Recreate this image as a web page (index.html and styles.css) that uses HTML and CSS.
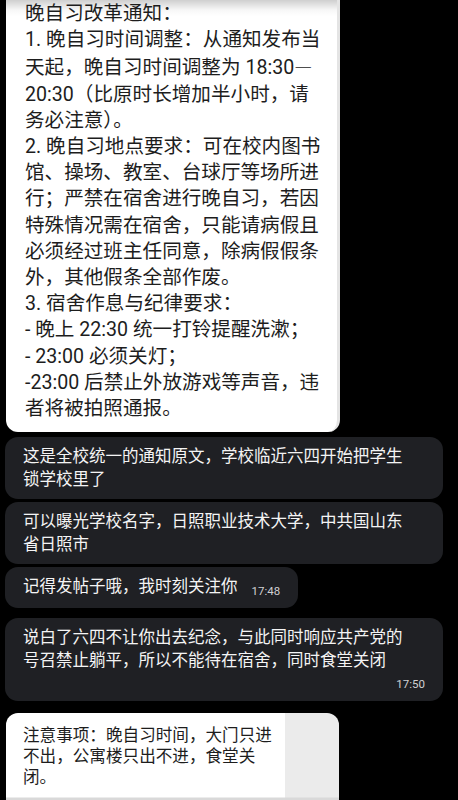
FILE: index.html
```html
<!DOCTYPE html>
<html lang="zh-CN">
<head>
    <meta charset="UTF-8">
    <meta name="viewport" content="width=device-width, initial-scale=1.0">
    <title>晚自习改革通知</title>
    <link rel="stylesheet" href="styles.css">
</head>
<body>
    <main class="chat">
        <div class="notice">
            晚自习改革通知：<br>
            1. 晚自习时间调整：从通知发布当<br>
            天起，晚自习时间调整为 18:30<span class="dash">—</span><br>
            20:30（比原时长增加半小时，请<br>
            务必注意）。<br>
            2. 晚自习地点要求：可在校内图书<br>
            馆、操场、教室、台球厅等场所进<br>
            行；严禁在宿舍进行晚自习，若因<br>
            特殊情况需在宿舍，只能请病假且<br>
            必须经过班主任同意，除病假假条<br>
            外，其他假条全部作废。<br>
            3. 宿舍作息与纪律要求：<br>
            - 晚上 22:30 统一打铃提醒洗漱；<br>
            - 23:00 必须关灯；<br>
            -23:00 后禁止外放游戏等声音，违<br>
            者将被拍照通报。
        </div>

        <div class="msg">这是全校统一的通知原文，学校临近六四开始把学生<br>锁学校里了</div>
        <div class="msg">可以曝光学校名字，日照职业技术大学，中共国山东<br>省日照市</div>
        <div class="msg short">记得发帖子哦，我时刻关注你<span class="time">17:48</span></div>
        <div class="msg last">
            说白了六四不让你出去纪念，与此同时响应共产党的<br>号召禁止躺平，所以不能待在宿舍，同时食堂关闭
            <div class="time-row">17:50</div>
        </div>

        <div class="notice-img">
            注意事项：晚自习时间，大门只进<br>
            不出，公寓楼只出不进，食堂关<br>
            闭。
        </div>
    </main>
</body>
</html>
```

FILE: styles.css
```css
body {
    margin: 0;
    height: 800px;
    overflow: hidden;
    background: #000;
    font-family: Roboto, "Noto Sans CJK SC", sans-serif;
}

.chat {
    display: flex;
    flex-direction: column;
    align-items: flex-start;
    padding-left: 5px;
}

.notice {
    box-sizing: border-box;
    width: 334px;
    margin-left: 1px;
    padding: 1px 0 10px 19px;
    font-size: 19.6px;
    line-height: 26.2px;
    color: #1d1d1d;
    background: linear-gradient(#cfcfcf 0, #f7f7f7 10px, #fff 16px);
    border-right: 3px solid #e4e4e4;
    border-radius: 0 0 12px 12px;
}

.dash {
    font-family: "Noto Sans CJK SC", sans-serif;
    font-size: 18px;
}

.msg {
    box-sizing: border-box;
    width: 438px;
    margin-top: 3px;
    padding: 8px 18px;
    font-size: 16.5px;
    line-height: 23px;
    color: #f4f4f4;
    background: #1f2024;
    border-radius: 13px;
}

.notice + .msg {
    margin-top: 5px;
}

.msg.short {
    width: auto;
    margin-top: 3px;
}

.time {
    margin-left: 14px;
    font-size: 11.5px;
    color: #cfcfd2;
    position: relative;
    top: 3px;
}

.msg.last {
    margin-top: 10px;
    padding-bottom: 9px;
}

.time-row {
    text-align: right;
    font-size: 11.5px;
    line-height: 16px;
    margin-top: 4px;
    color: #cfcfd2;
}

.notice-img {
    box-sizing: border-box;
    width: 333px;
    height: 100px;
    margin: 12px 0 0 1px;
    padding: 12px 0 0 17px;
    font-size: 16.6px;
    line-height: 21px;
    color: #1d1d1d;
    background:
        linear-gradient(transparent 84px, #d9d9d9 85px),
        linear-gradient(90deg, #fff 279px, #ebebeb 279px);
    border-radius: 12px 12px 0 0;
}
```
